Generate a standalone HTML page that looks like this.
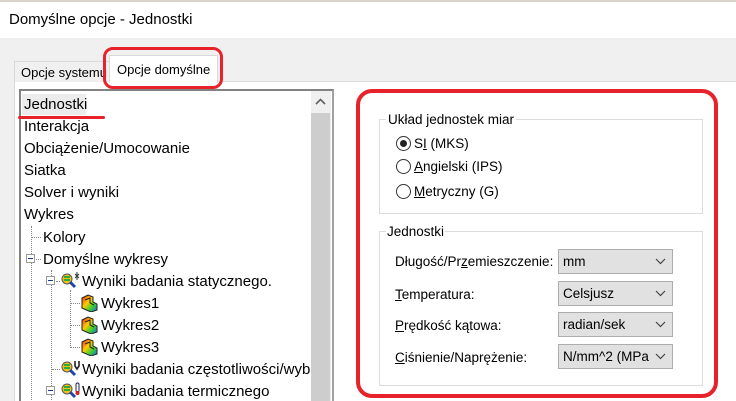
<!DOCTYPE html>
<html style="width:736px;height:401px;overflow:hidden"><head><meta charset="utf-8"><style>
*{margin:0;padding:0;box-sizing:border-box}
body{width:736px;height:401px;overflow:hidden;background:#f0f0f0;font-family:"Liberation Sans","DejaVu Sans",sans-serif;color:#000;position:relative}
.a{position:absolute}
.t{font-size:14.5px;white-space:nowrap}
.s{font-size:12.5px;white-space:nowrap}
u{text-decoration:underline}
.row{position:absolute;height:22px;line-height:22px;font-size:15px;white-space:nowrap}
.dv{position:absolute;border-left:1px dotted #888}
.dh{position:absolute;border-top:1px dotted #888}
.mb{position:absolute;width:9px;height:9px;border:1px solid #999;background:#fff}
.mb:after{content:"";position:absolute;left:1px;top:3px;width:5px;height:1px;background:#1a3a8a}
.cb{position:absolute;left:558px;width:115px;height:25px;background:#e1e1e1;border:1px solid #adadad;font-size:13.5px;line-height:23px;padding-left:4px;white-space:nowrap;overflow:hidden}
.cb svg{position:absolute;right:6px;top:8px}
.rd{position:absolute;left:396px;width:15px;height:15px;border:1px solid #333;border-radius:50%;background:#fff}
.lb{position:absolute;left:395px;font-size:13.5px;white-space:nowrap}
</style></head><body>
<div class="a" style="left:0;top:0;width:736px;height:38px;background:#fff"></div>
<div class="a" style="left:0;top:0;width:736px;height:2px;background:#d8d4cc"></div>
<div class="a t" style="left:9px;top:11px;font-size:15px">Domyślne opcje - Jednostki</div>

<div class="a" style="left:14px;top:81px;width:730px;height:330px;background:#fff;border:1px solid #d9d9d9"></div>
<div class="a" style="left:14px;top:61px;width:96px;height:21px;background:#f0f0f0;border:1px solid #d9d9d9;border-bottom:none;overflow:hidden"><span class="s" style="position:absolute;left:6px;top:3px;font-size:13px">Opcje systemu</span></div>
<div class="a" style="left:109px;top:55px;width:109px;height:28px;background:#fff;border:1px solid #d9d9d9;border-bottom:none"><span class="s" style="position:absolute;left:7px;top:6px;font-size:13px">Opcje domyślne</span></div>
<div class="a" style="left:103px;top:47px;width:120px;height:42px;border:3.5px solid #e8222a;border-radius:10px"></div>

<div class="a" style="left:19px;top:89px;width:315px;height:320px;border:2px solid #828282;border-right-color:#a0a0a0;background:#fff"></div>
<div class="a" style="left:311px;top:91px;width:20px;height:320px;background:#f0f0f0"></div>
<div class="a" style="left:311px;top:113px;width:19px;height:300px;background:#cdcdcd"></div>
<svg class="a" style="left:315px;top:98px" width="11" height="8"><path d="M1 6L5.5 1.5L10 6" fill="none" stroke="#606060" stroke-width="1.6"/></svg>

<div class="a" style="left:22px;top:94px;width:64px;height:21px;background:#ececec"></div>
<div class="a" style="left:18px;top:116px;width:87px;height:3px;background:#e8222a;border-radius:2px"></div>

<div class="row" style="left:24px;top:94px">Jednostki</div>
<div class="row" style="left:24px;top:116px">Interakcja</div>
<div class="row" style="left:24px;top:138px">Obciążenie/Umocowanie</div>
<div class="row" style="left:24px;top:160px">Siatka</div>
<div class="row" style="left:24px;top:182px">Solver i wyniki</div>
<div class="row" style="left:24px;top:204px">Wykres</div>

<div class="dv" style="left:31px;top:226px;height:180px"></div>
<div class="dh" style="left:32px;top:237px;width:9px"></div>
<div class="row" style="left:43px;top:227px">Kolory</div>
<div class="mb" style="left:26px;top:254px"></div>
<div class="dh" style="left:36px;top:259px;width:5px"></div>
<div class="row" style="left:43px;top:249px">Domyślne wykresy</div>

<div class="dv" style="left:51px;top:270px;height:140px"></div>
<div class="mb" style="left:46px;top:276px"></div>
<div class="dh" style="left:56px;top:281px;width:4px"></div>
<div class="dv" style="left:70px;top:290px;height:58px"></div>
<div class="dh" style="left:71px;top:303px;width:9px"></div>
<div class="dh" style="left:71px;top:325px;width:9px"></div>
<div class="dh" style="left:71px;top:347px;width:9px"></div>
<div class="dh" style="left:52px;top:369px;width:8px"></div>
<div class="mb" style="left:46px;top:386px"></div>

<svg class="a" style="left:60px;top:272px" width="22" height="20"><circle cx="7" cy="7" r="5" fill="#f0c020" stroke="#555"/><path d="M4 5h6M4 8h6" stroke="#3a3" stroke-width="2"/><path d="M10 10l5 5" stroke="#2244aa" stroke-width="3"/><path d="M15 2l4 4M19 2l-4 4M17 0v8" stroke="#333"/></svg>
<svg class="a" style="left:60px;top:360px" width="22" height="20"><circle cx="7" cy="7" r="5" fill="#f0c020" stroke="#555"/><path d="M4 5h6M4 8h6" stroke="#3a3" stroke-width="2"/><path d="M10 10l5 5" stroke="#2244aa" stroke-width="3"/><path d="M15 1v5l2 3 2-3V1" fill="none" stroke="#222" stroke-width="1.6"/></svg>
<svg class="a" style="left:60px;top:382px" width="22" height="20"><circle cx="7" cy="7" r="5" fill="#f0c020" stroke="#555"/><path d="M4 5h6M4 8h6" stroke="#3a3" stroke-width="2"/><path d="M10 10l5 5" stroke="#2244aa" stroke-width="3"/><rect x="16" y="1" width="3" height="9" rx="1.5" fill="#fff" stroke="#225"/><circle cx="17.5" cy="11" r="2" fill="#c22"/></svg>
<div class="row" style="left:82px;top:271px">Wyniki badania statycznego.</div>
<div class="row" style="left:82px;top:359px;width:228px;overflow:hidden">Wyniki badania częstotliwości/wyboczenia</div>
<div class="row" style="left:82px;top:381px">Wyniki badania termicznego</div>

<svg class="a" style="left:80px;top:294px" width="18" height="18"><defs><linearGradient id="g" x1="0" y1="0" x2="1" y2="1"><stop offset="0" stop-color="#e21"/><stop offset=".4" stop-color="#fc0"/><stop offset=".7" stop-color="#3c3"/><stop offset="1" stop-color="#26f"/></linearGradient></defs><path d="M2 4L8 1 13 3v5l4 2v6l-6 2-9-4z" fill="url(#g)" stroke="#222"/><path d="M5 6l5-2v5l4 2" fill="none" stroke="#222"/></svg>
<svg class="a" style="left:80px;top:316px" width="18" height="18"><path d="M2 4L8 1 13 3v5l4 2v6l-6 2-9-4z" fill="url(#g)" stroke="#222"/><path d="M5 6l5-2v5l4 2" fill="none" stroke="#222"/></svg>
<svg class="a" style="left:80px;top:338px" width="18" height="18"><path d="M2 4L8 1 13 3v5l4 2v6l-6 2-9-4z" fill="url(#g)" stroke="#222"/><path d="M5 6l5-2v5l4 2" fill="none" stroke="#222"/></svg>
<div class="row" style="left:101px;top:293px">Wykres1</div>
<div class="row" style="left:101px;top:315px">Wykres2</div>
<div class="row" style="left:101px;top:337px">Wykres3</div>

<div class="a" style="left:379px;top:119px;width:324px;height:95px;border:1px solid #dcdcdc"></div>
<div class="a s" style="left:386px;top:112px;background:#fff;padding:0 2px;font-size:13.5px">Układ jednostek miar</div>
<div class="rd" style="top:136px"></div><div class="a" style="left:400px;top:140px;width:7px;height:7px;border-radius:50%;background:#222"></div>
<div class="rd" style="top:159px"></div>
<div class="rd" style="top:184px"></div>
<div class="lb" style="left:414px;top:136px">S<u>I</u> (MKS)</div>
<div class="lb" style="left:414px;top:159px"><u>A</u>ngielski (IPS)</div>
<div class="lb" style="left:414px;top:184px"><u>M</u>etryczny (G)</div>

<div class="a" style="left:379px;top:231px;width:324px;height:155px;border:1px solid #dcdcdc"></div>
<div class="a s" style="left:386px;top:224px;background:#fff;padding:0 1px;font-size:13.5px">Jednostki</div>
<div class="lb" style="top:254px">Długość/Pr<u>z</u>emieszczenie:</div>
<div class="lb" style="top:287px"><u>T</u>emperatura:</div>
<div class="lb" style="top:318px"><u>P</u>rędkość kątowa:</div>
<div class="lb" style="top:350px"><u>C</u>iśnienie/Naprężenie:</div>
<div class="cb" style="top:249px">mm<svg width="11" height="7"><path d="M1 1l4.5 4.5L10 1" fill="none" stroke="#444" stroke-width="1.2"/></svg></div>
<div class="cb" style="top:281px">Celsjusz<svg width="11" height="7"><path d="M1 1l4.5 4.5L10 1" fill="none" stroke="#444" stroke-width="1.2"/></svg></div>
<div class="cb" style="top:312px">radian/sek<svg width="11" height="7"><path d="M1 1l4.5 4.5L10 1" fill="none" stroke="#444" stroke-width="1.2"/></svg></div>
<div class="cb" style="top:344px"><span style="display:inline-block;width:86px;overflow:hidden;vertical-align:top">N/mm^2 (MPa)</span><svg width="11" height="7"><path d="M1 1l4.5 4.5L10 1" fill="none" stroke="#444" stroke-width="1.2"/></svg></div>

<div class="a" style="left:356px;top:89px;width:362px;height:309px;border:4px solid #e8222a;border-radius:16px"></div>
</body></html>
